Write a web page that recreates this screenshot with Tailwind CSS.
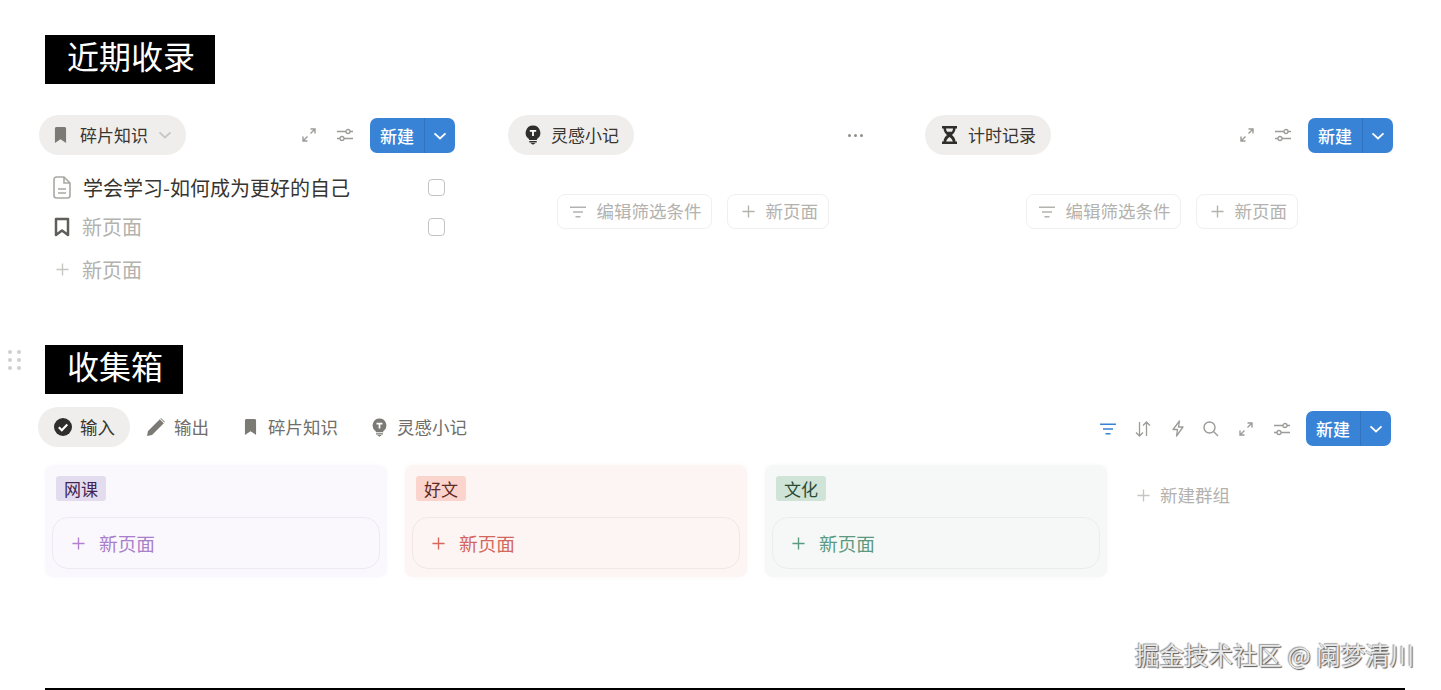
<!DOCTYPE html>
<html lang="zh-CN">
<head>
    <meta charset="UTF-8">
    <title>收集箱</title>
    <script src="https://cdn.jsdelivr.net/npm/@tailwindcss/browser@4"></script>
</head>
<body class="bg-white font-['Noto_Sans_CJK_SC','Noto_Sans',sans-serif] text-[#37352f]">
    <svg class="hidden">
        <defs>
            <symbol id="i-bookmark" viewBox="0 0 14 18"><path fill="currentColor" d="M1 2.2C1 1.2 1.7.5 2.7.5h8.6c1 0 1.7.7 1.7 1.7v15.3L7 13.6 1 17.500z"/></symbol>
            <symbol id="i-bulb" viewBox="0 0 16 20"><path fill="currentColor" d="M8 .5a7.300 7.300 0 0 0-4 13.400V15h8v-1.100A7.300 7.300 0 0 0 8 .5z"/><path fill="#fff" d="M4.800 5h6.400v1.800H8.900V11H7.100V6.800H4.800z"/><path fill="currentColor" d="M4.300 16h7.400v1.400H4.300zM5.500 18h5L8 19.800z"/></symbol>
            <symbol id="i-expand" viewBox="0 0 16 16"><path fill="none" stroke="currentColor" stroke-width="1.400" d="M2 9.500V14h4.500M2 14l4.500-4.500M9.500 2H14v4.500M14 2L9.500 6.500"/></symbol>
            <symbol id="i-sliders" viewBox="0 0 18 14"><g fill="none" stroke="currentColor" stroke-width="1.300"><path d="M1 3.500h9M14 3.500h3M1 10.500h3M8 10.500h9"/><circle cx="12" cy="3.500" r="2"/><circle cx="6" cy="10.500" r="2"/></g></symbol>
            <symbol id="i-chevron" viewBox="0 0 14 8"><path fill="none" stroke="currentColor" stroke-width="1.800" d="M1.500 1.300L7 6.500l5.500-5.200"/></symbol>
            <symbol id="i-plus" viewBox="0 0 14 14"><path fill="none" stroke="currentColor" stroke-width="1.500" d="M7 .5v13M.5 7h13"/></symbol>
            <symbol id="i-filter" viewBox="0 0 16 12"><path fill="none" stroke="currentColor" stroke-width="1.400" d="M0 1.200h16M3 6h10M5.500 10.800h5"/></symbol>
        </defs>
    </svg>

    <div class="relative w-[1441px] h-[690px] overflow-hidden">
        <!-- 近期收录 -->
        <section class="h-[345px] pt-[35px]">
            <h2 class="ml-[45px] w-fit h-[49px] bg-black text-white text-[32px] leading-[47px] pl-[22px] pr-[20px] font-['Liberation_Serif','Noto_Sans_CJK_SC',serif]">近期收录</h2>

            <div class="ml-[39px] mt-[31px] flex gap-[53px]">
                <div class="w-[416px]">
                    <div class="flex items-center justify-between h-[40px]">
                        <div class="flex items-center h-[40px] rounded-[20px] bg-[#efeeec] pl-[15px] pr-[14px] text-[17px]">
                            <svg class="w-[13px] h-[18px] text-[#7b7a75]"><use href="#i-bookmark"/></svg>
                            <span class="ml-[13px]">碎片知识</span>
                            <svg class="ml-[10px] w-[14px] h-[8px] text-[#c6c5c2]"><use href="#i-chevron"/></svg>
                        </div>
                        <div class="flex items-center">
                            <svg class="w-[16px] h-[16px] text-[#9c9b97]"><use href="#i-expand"/></svg>
                            <svg class="ml-[19px] w-[18px] h-[14px] text-[#9c9b97]"><use href="#i-sliders"/></svg>
                            <div class="ml-[16px] flex items-center h-[35px] rounded-[7px] bg-[#3883d6] text-white mt-[1px]">
                                <span class="w-[55px] text-center text-[17px] font-medium border-r border-[#2f74c0] leading-[35px]">新建</span>
                                <span class="w-[30px] flex justify-center"><svg class="w-[14px] h-[8px]"><use href="#i-chevron"/></svg></span>
                            </div>
                        </div>
                    </div>
                    <div class="mt-[13px] flex items-center h-[39px] pl-[14px] text-[20px]">
                        <svg class="w-[18px] h-[23px] text-[#a9a8a4]" viewBox="0 0 18 23"><path fill="none" stroke="currentColor" stroke-width="1.600" d="M3.500 1h7.500L17 7v12.500a2.500 2.500 0 0 1-2.500 2.500h-11A2.500 2.500 0 0 1 1 19.500v-16A2.500 2.500 0 0 1 3.500 1zM11 1v6h6M5 13h8M5 17h8"/></svg>
                        <span class="ml-[12px] flex-1">学会学习-如何成为更好的自己</span>
                        <span class="mr-[10px] w-[17px] h-[17px] rounded-[4px] border border-[#c4c3c0]"></span>
                    </div>
                    <div class="flex items-center h-[39px] pl-[15px] text-[20px] text-[#b3b2ae]">
                        <svg class="w-[16px] h-[20px] text-[#5f5e5a]" viewBox="0 0 16 20"><path fill="none" stroke="currentColor" stroke-width="2.500" stroke-linejoin="round" d="M2 2h12v16l-6-4.500L2 18z"/></svg>
                        <span class="ml-[12px] flex-1">新页面</span>
                        <span class="mr-[10px] w-[17px] h-[18px] rounded-[4px] border border-[#c4c3c0]"></span>
                    </div>
                    <div class="mt-[4px] flex items-center h-[39px] pl-[17px] text-[20px] text-[#b3b2ae]">
                        <svg class="w-[13px] h-[13px] text-[#c6c5c2]"><use href="#i-plus"/></svg>
                        <span class="ml-[13px]">新页面</span>
                    </div>
                </div>

                <div class="w-[364px]">
                    <div class="flex items-center justify-between h-[40px]">
                        <div class="flex items-center h-[40px] rounded-[20px] bg-[#efeeec] pl-[17px] pr-[15px] text-[17px]">
                            <svg class="w-[16px] h-[20px] text-[#2f2e2b]"><use href="#i-bulb"/></svg>
                            <span class="ml-[10px]">灵感小记</span>
                        </div>
                        <div class="mr-[9px] flex gap-[3px]">
                            <span class="w-[3px] h-[3px] rounded-full bg-[#8f8e8a]"></span>
                            <span class="w-[3px] h-[3px] rounded-full bg-[#8f8e8a]"></span>
                            <span class="w-[3px] h-[3px] rounded-full bg-[#8f8e8a]"></span>
                        </div>
                    </div>
                    <div class="mt-[39px] pl-[5px] flex justify-center gap-[15px] text-[17.500px] text-[#b3b2ae]">
                        <div class="flex items-center h-[35px] w-[155px] rounded-[8px] border border-[#f1f0ee] pl-[12px]">
                            <svg class="w-[16px] h-[12px] text-[#b3b2ae]"><use href="#i-filter"/></svg>
                            <span class="ml-[11px]">编辑筛选条件</span>
                        </div>
                        <div class="flex items-center h-[35px] w-[102px] rounded-[8px] border border-[#f1f0ee] pl-[14px]">
                            <svg class="w-[13px] h-[13px] text-[#b3b2ae]"><use href="#i-plus"/></svg>
                            <span class="ml-[11px]">新页面</span>
                        </div>
                    </div>
                </div>

                <div class="w-[468px]">
                    <div class="flex items-center justify-between h-[40px]">
                        <div class="flex items-center h-[40px] rounded-[20px] bg-[#efeeec] pl-[17px] pr-[15px] text-[17px]">
                            <svg class="w-[15px] h-[18px] text-[#2f2e2b]" viewBox="0 0 15 18"><path fill="currentColor" d="M0 0h15v2.500h-1.500c0 3-1.800 5-3.500 6.500 1.700 1.500 3.500 3.500 3.500 6.500H15V18H0v-2.500h1.500C1.500 12.500 3.300 10.500 5 9 3.300 7.500 1.500 5.500 1.500 2.500H0zm4 2.500c0 1.200.5 2.300 1.200 3.200h4.600c.7-.9 1.200-2 1.200-3.200zM7.500 11C5.800 12.300 4.600 13.800 4.200 15.500h6.600C10.400 13.800 9.200 12.300 7.500 11z"/></svg>
                            <span class="ml-[11px]">计时记录</span>
                        </div>
                        <div class="flex items-center">
                            <svg class="w-[16px] h-[16px] text-[#9c9b97]"><use href="#i-expand"/></svg>
                            <svg class="ml-[19px] w-[18px] h-[14px] text-[#9c9b97]"><use href="#i-sliders"/></svg>
                            <div class="ml-[16px] flex items-center h-[35px] rounded-[7px] bg-[#3883d6] text-white mt-[1px]">
                                <span class="w-[55px] text-center text-[17px] font-medium border-r border-[#2f74c0] leading-[35px]">新建</span>
                                <span class="w-[30px] flex justify-center"><svg class="w-[14px] h-[8px]"><use href="#i-chevron"/></svg></span>
                            </div>
                        </div>
                    </div>
                    <div class="mt-[39px] pl-[5px] flex justify-center gap-[15px] text-[17.500px] text-[#b3b2ae]">
                        <div class="flex items-center h-[35px] w-[155px] rounded-[8px] border border-[#f1f0ee] pl-[12px]">
                            <svg class="w-[16px] h-[12px] text-[#b3b2ae]"><use href="#i-filter"/></svg>
                            <span class="ml-[11px]">编辑筛选条件</span>
                        </div>
                        <div class="flex items-center h-[35px] w-[102px] rounded-[8px] border border-[#f1f0ee] pl-[14px]">
                            <svg class="w-[13px] h-[13px] text-[#b3b2ae]"><use href="#i-plus"/></svg>
                            <span class="ml-[11px]">新页面</span>
                        </div>
                    </div>
                </div>
            </div>
        </section>

        <!-- 收集箱 -->
        <section class="relative">
            <div class="absolute left-[8px] top-[5px] grid grid-cols-2 gap-x-[5px] gap-y-[4px]">
                <span class="w-[4px] h-[4px] rounded-full bg-[#d0cfcc]"></span><span class="w-[4px] h-[4px] rounded-full bg-[#d0cfcc]"></span>
                <span class="w-[4px] h-[4px] rounded-full bg-[#d0cfcc]"></span><span class="w-[4px] h-[4px] rounded-full bg-[#d0cfcc]"></span>
                <span class="w-[4px] h-[4px] rounded-full bg-[#d0cfcc]"></span><span class="w-[4px] h-[4px] rounded-full bg-[#d0cfcc]"></span>
            </div>
            <h2 class="ml-[45px] w-fit h-[49px] bg-black text-white text-[32px] leading-[47px] pl-[22px] pr-[20px] font-['Liberation_Serif','Noto_Sans_CJK_SC',serif]">收集箱</h2>

            <div class="ml-[38px] w-[1353px] mt-[13px] h-[40px] flex items-center justify-between text-[17.500px] text-[#6f6e69]">
                <div class="flex items-center">
                    <div class="flex items-center h-[40px] w-[92px] rounded-[20px] bg-[#efeeec] pl-[16px] text-[#37352f]">
                        <svg class="w-[18px] h-[18px] text-[#2f2e2b]" viewBox="0 0 18 18"><circle cx="9" cy="9" r="9" fill="currentColor"/><path fill="none" stroke="#fff" stroke-width="2.200" d="M4.800 9.200l3 3 5.500-5.700"/></svg>
                        <span class="ml-[8px]">输入</span>
                    </div>
                    <div class="ml-[17px] flex items-center">
                        <svg class="w-[18px] h-[18px] text-[#7b7a75]" viewBox="0 0 18 18"><path fill="currentColor" d="M0 18l1-5L12.800 1.200l4 4L5 17zM14 0l4 4-.6.600-4-4z"/></svg>
                        <span class="ml-[9px]">输出</span>
                    </div>
                    <div class="ml-[35px] flex items-center">
                        <svg class="w-[13px] h-[18px] text-[#7b7a75]"><use href="#i-bookmark"/></svg>
                        <span class="ml-[11px]">碎片知识</span>
                    </div>
                    <div class="ml-[34px] flex items-center">
                        <svg class="w-[15px] h-[19px] text-[#7b7a75]"><use href="#i-bulb"/></svg>
                        <span class="ml-[10px]">灵感小记</span>
                    </div>
                </div>
                <div class="flex items-center mt-[3px] text-[#9c9b97]">
                    <svg class="w-[16px] h-[12px] text-[#3883d6]"><use href="#i-filter"/></svg>
                    <svg class="ml-[19px] w-[16px] h-[16px]" viewBox="0 0 16 16"><path fill="none" stroke="currentColor" stroke-width="1.300" d="M4.500 1v14M1 11.500L4.500 15 8 11.500M11.500 15V1M8 4.500L11.500 1 15 4.500"/></svg>
                    <svg class="ml-[21px] w-[12px] h-[17px]" viewBox="0 0 12 17"><path fill="none" stroke="currentColor" stroke-width="1.300" stroke-linejoin="round" d="M7.500 1L1 9.500h4.500L4.500 16 11 7H6.500z"/></svg>
                    <svg class="ml-[19px] w-[16px] h-[16px]" viewBox="0 0 16 16"><path fill="none" stroke="currentColor" stroke-width="1.400" d="M10.500 10.500L15 15M12 6.500a5.500 5.500 0 1 1-11 0 5.500 5.500 0 0 1 11 0z"/></svg>
                    <svg class="ml-[19px] w-[16px] h-[16px]"><use href="#i-expand"/></svg>
                    <svg class="ml-[19px] w-[18px] h-[14px]"><use href="#i-sliders"/></svg>
                    <div class="ml-[15px] flex items-center h-[35px] rounded-[7px] bg-[#3883d6] text-white">
                        <span class="w-[55px] text-center text-[17px] font-medium border-r border-[#2f74c0] leading-[35px]">新建</span>
                        <span class="w-[30px] flex justify-center"><svg class="w-[14px] h-[8px]"><use href="#i-chevron"/></svg></span>
                    </div>
                </div>
            </div>

            <div class="ml-[45px] mt-[18px] flex gap-[18px]">
                <div class="w-[342px] h-[112px] rounded-[8px] bg-[#faf8fd] shadow-[0_0_4px_#faf8fd] px-[7px] pt-[11px]">
                    <span class="ml-[4px] block w-[50px] h-[25px] rounded-[3px] bg-[#e3dcee] text-center text-[17px] leading-[25px] text-[#412454]">网课</span>
                    <div class="mt-[16px] flex items-center h-[52px] rounded-[16px] border border-[#eee9f3] pl-[19px] text-[#a97fc9] text-[18.700px]">
                        <svg class="w-[13px] h-[13px] text-[#b27fd0]"><use href="#i-plus"/></svg>
                        <span class="ml-[14px]">新页面</span>
                    </div>
                </div>
                <div class="w-[342px] h-[112px] rounded-[8px] bg-[#fdf5f4] shadow-[0_0_4px_#fdf5f4] px-[7px] pt-[11px]">
                    <span class="ml-[4px] block w-[50px] h-[25px] rounded-[3px] bg-[#fbd4cd] text-center text-[17px] leading-[25px] text-[#5f2a23]">好文</span>
                    <div class="mt-[16px] flex items-center h-[52px] rounded-[16px] border border-[#f2e6e6] pl-[19px] text-[#d2675c] text-[18.700px]">
                        <svg class="w-[13px] h-[13px] text-[#d9665a]"><use href="#i-plus"/></svg>
                        <span class="ml-[14px]">新页面</span>
                    </div>
                </div>
                <div class="w-[342px] h-[112px] rounded-[8px] bg-[#f5f8f7] shadow-[0_0_4px_#f5f8f7] px-[7px] pt-[11px]">
                    <span class="ml-[4px] block w-[50px] h-[25px] rounded-[3px] bg-[#cfe3d6] text-center text-[17px] leading-[25px] text-[#2b4a36]">文化</span>
                    <div class="mt-[16px] flex items-center h-[52px] rounded-[16px] border border-[#e9eeed] pl-[19px] text-[#5c9a80] text-[18.700px]">
                        <svg class="w-[13px] h-[13px] text-[#5c9a80]"><use href="#i-plus"/></svg>
                        <span class="ml-[14px]">新页面</span>
                    </div>
                </div>
                <div class="h-[60px] flex items-center pl-[12px] text-[17.500px] text-[#b3b2ae]">
                    <svg class="w-[13px] h-[13px] text-[#c6c5c2]"><use href="#i-plus"/></svg>
                    <span class="ml-[10px]">新建群组</span>
                </div>
            </div>

            <div class="ml-[45px] mt-[111px] w-[1360px] h-[2px] bg-black"></div>
        </section>

        <div class="absolute left-[1135px] top-[638px] text-[24.500px] leading-[34px] whitespace-nowrap text-[#e8e8e8] [text-shadow:1px_1px_1px_#555,-1px_-1px_1px_#999]">掘金技术社区 @ 阑梦清川</div>
    </div>
</body>
</html>
